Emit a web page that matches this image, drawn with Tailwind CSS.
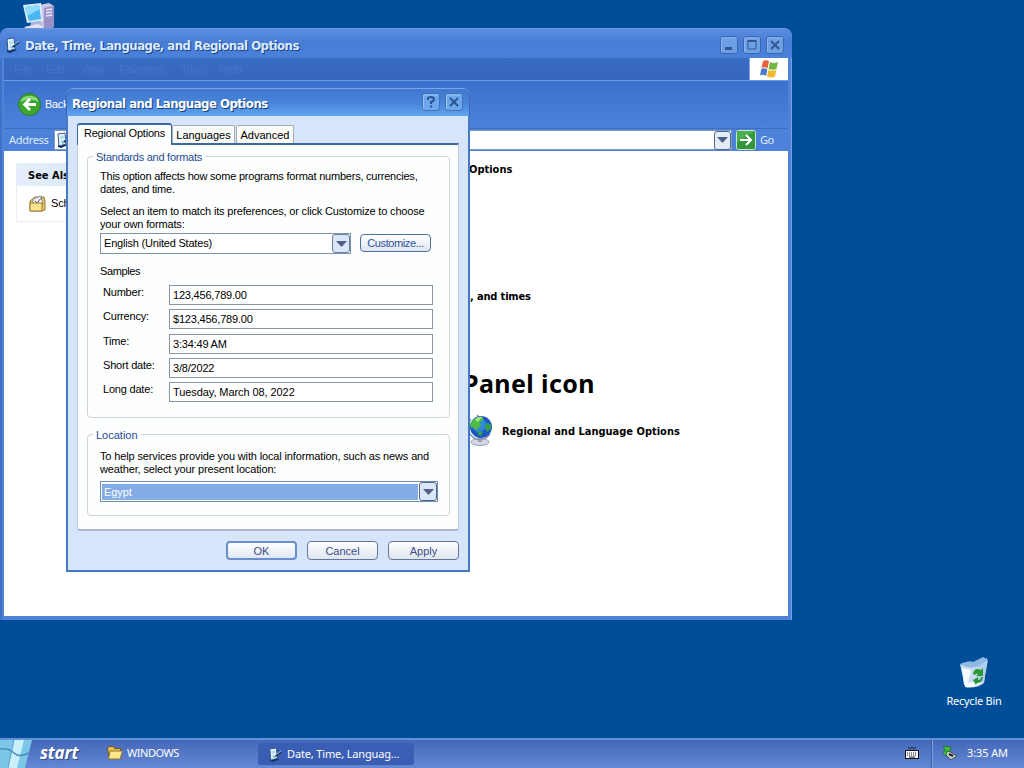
<!DOCTYPE html>
<html lang="en">
<head>
    <meta charset="UTF-8">
    <meta name="viewport" content="width=device-width, initial-scale=1.0">
    <title>Regional and Language Options</title>
    <script src="https://cdn.jsdelivr.net/npm/@tailwindcss/browser@4"></script>
</head>
<body class="relative w-[1024px] h-[768px] overflow-hidden bg-[#004e98] font-['Liberation_Sans',sans-serif] text-[11px] leading-[13px] text-black">
    <svg class="hidden">
        <symbol id="options" viewBox="0 0 16 16">
            <path d="M2 13l8-1 2 1-7 3-3-1z" fill="#14305f"/>
            <path d="M2 2l7-1 1 11-7 2z" fill="#eef7fc" stroke="#2b5590"/>
            <path d="M4 4l4-.5v3L4 8z" fill="#b5def2"/>
            <path d="M5 9l2 2 2-3" stroke="#7fbfdd" stroke-width="1.500" fill="none"/>
            <path d="M8 10l6-5" stroke="#20365c" stroke-width="2"/>
            <path d="M9 8l5-4" stroke="#a9c7e5"/>
        </symbol>
        <symbol id="arrow" viewBox="0 0 11 6"><path d="M0 0h11l-5.500 6z" fill="#4d6185"/></symbol>
    </svg>

    <!-- My Computer icon -->
    <svg class="absolute left-[22px] top-[2px]" width="34" height="34" viewBox="0 0 34 34">
        <path d="M17 3l10-2 5 3v21l-10 3-5-3z" fill="#c9c4e4"/>
        <path d="M22 6l10-2v21l-10 3z" fill="#9a90c8"/>
        <path d="M24 8l6-1M24 11l6-1M24 14l6-1" stroke="#e8e4fa" stroke-width="1.500"/>
        <path d="M1 3l18-2 2 18-16 2z" fill="#dcebf8"/>
        <path d="M3 5l14-2 2 14-12 2z" fill="#4cb6f0"/>
        <path d="M3 5l14-2 1 4-13 7z" fill="#8fdcfc"/>
        <path d="M9 20l9-1 2 5-12 3z" fill="#a9b8dc"/>
        <path d="M2 25l14-3 6 3-12 6z" fill="#e6def0"/>
    </svg>

    <!-- Control panel window -->
    <div class="absolute left-0 top-[28px] w-[792px] h-[592px] rounded-t-[8px] border-t border-[#6b97e4] bg-[#5083d8] flex flex-col px-1 pb-1 shadow-[inset_2px_0_0_#3f73c9,inset_-1px_0_0_#78a0e6]">
        <div class="h-[29px] shrink-0 flex items-center -mx-1 px-[5px] pt-[2px] rounded-t-[8px] bg-linear-to-b from-[#5b8de0] via-[#477cd5] to-[#4a81da]">
            <svg class="w-4 h-4 mr-1"><use href="#options"/></svg>
            <span class="pt-[2px] font-['DejaVu_Sans_Condensed','DejaVu_Sans',sans-serif] font-bold text-[13px] tracking-[-0.5px] text-[#dcebff] [text-shadow:1px_1px_0_#17417f] whitespace-nowrap">Date, Time, Language, and Regional Options</span>
            <div class="ml-auto flex gap-[5px] pr-[3px]">
                <svg width="18" height="18" viewBox="0 0 18 18"><rect x=".5" y=".5" width="17" height="17" rx="2.500" fill="#6c9fe4" stroke="#3c67ae"/><path d="M1.500 16V2h15" stroke="#8bb5ee" fill="none"/><path d="M5 12.500h7" stroke="#34578f" stroke-width="3"/></svg>
                <svg width="18" height="18" viewBox="0 0 18 18"><rect x=".5" y=".5" width="17" height="17" rx="2.500" fill="#6c9fe4" stroke="#3c67ae"/><path d="M1.500 16V2h15" stroke="#8bb5ee" fill="none"/><path d="M5 5h8v8H5z" stroke="#34578f" fill="none"/><path d="M4.500 5h9" stroke="#34578f" stroke-width="2"/></svg>
                <svg width="18" height="18" viewBox="0 0 18 18"><rect x=".5" y=".5" width="17" height="17" rx="2.500" fill="#6c9fe4" stroke="#3c67ae"/><path d="M1.500 16V2h15" stroke="#8bb5ee" fill="none"/><path d="M5 5l8 8M13 5l-8 8" stroke="#34578f" stroke-width="2"/></svg>
            </div>
        </div>
        <div class="h-[23px] shrink-0 flex border-b border-[#6f9ae4] bg-linear-to-b from-[#3b6cc4] to-[#3667be]">
            <div class="flex-1 flex items-center text-[#4675cb]">
                <span class="w-8 pl-[10px]">File</span><span class="w-[35px] pl-[10px]">Edit</span><span class="w-[40px] pl-[10px]">View</span><span class="w-[62px] pl-[8px]">Favorites</span><span class="w-[40px] pl-[8px]">Tools</span><span class="pl-[6px]">Help</span>
            </div>
            <div class="w-[39px] bg-white flex items-center justify-center border-l border-[#7fa6ea]">
                <svg width="20" height="18" viewBox="0 0 20 18">
                    <path d="M4 1q4-1.500 6 .5l-1.500 7q-3-2-6-.5z" fill="#e5623a"/>
                    <path d="M11 2q4 2 8 0l-1.500 7q-4 1.500-8 0z" fill="#72b63e"/>
                    <path d="M2.300 9q3-1.500 6 .5L7 16q-3-2-6-.5z" fill="#4778ce"/>
                    <path d="M9.300 10q4 1.500 8 0L16 16.500q-4 2-8 0z" fill="#f0b932"/>
                </svg>
            </div>
        </div>
        <div class="h-[48px] shrink-0 flex items-center pl-[14px] gap-1 text-white bg-linear-to-b from-[#3c70cd] to-[#4d82da] border-b border-[#3f70c0]">
            <svg width="23" height="23" viewBox="0 0 23 23"><circle cx="11.500" cy="11.500" r="11" fill="#3ba52c" stroke="#2c7a2c"/><path d="M2 9a10 9 0 0 1 19 0q-9-5-19 0z" fill="#8bd97a"/><path d="M18 11.500H7M12 6l-5.500 5.500L12 17" stroke="#fff" stroke-width="2.800" fill="none"/></svg>
            <span class="tracking-[-0.3px]">Back</span>
        </div>
        <div class="h-[22px] shrink-0 flex items-center bg-[#4d82da] text-[#dfeaff]">
            <span class="w-[50px] pl-[5px] pb-[2px] tracking-[-0.3px] font-['Noto_Sans',sans-serif]">Address</span>
            <div class="w-[678px] h-[20px] bg-white border border-[#7f9db9] flex items-center justify-between pl-[1px]">
                <svg class="w-4 h-4"><use href="#options"/></svg>
                <span class="w-[17px] h-[19px] rounded-[3px] border border-[#51688f] bg-[#e4ecf8] flex items-center justify-center"><svg class="w-[11px] h-[6px]"><use href="#arrow"/></svg></span>
            </div>
            <svg class="ml-[4px] mr-[4px]" width="20" height="20" viewBox="0 0 20 20"><rect x=".5" y=".5" width="19" height="19" rx="2" fill="#34963a" stroke="#c8e6cd"/><path d="M1 1h18L1 12z" fill="#4cae50"/><path d="M4 10h11M10 5l5 5-5 5" stroke="#fff" stroke-width="2" fill="none"/></svg>
            <span class="pb-[2px] tracking-[-0.5px] font-['Noto_Sans',sans-serif]">Go</span>
        </div>
        <div class="flex-1 min-h-0 bg-white flex overflow-hidden">
            <div class="w-[454px] pt-[12px] pl-[12px]">
                <div class="h-[23px] w-[180px] pl-[12px] pt-[6px] bg-linear-to-r from-[#e6effb] to-[#c9dcf6] font-['DejaVu_Sans_Condensed',sans-serif] font-bold">See Als</div>
                <div class="h-[36px] w-[180px] border border-t-0 border-[#e8eef6] pl-[12px] flex items-center gap-[5px]">
                    <svg width="17" height="17" viewBox="0 0 17 17"><path d="M1 6l5-4h9l1 4v9l-3 1H1z" fill="#e8c65a" stroke="#9a7d32"/><path d="M4 4l8-3 2 8H4z" fill="#f2f3f6" stroke="#8a8f9b"/><path d="M6 6l2 2 5-6" stroke="#555" fill="none"/><path d="M1 8h12v8H1z" fill="#f9e48e" stroke="#9a7d32"/></svg>
                    <span class="tracking-[-0.2px]">Sch</span>
                </div>
            </div>
            <div class="flex-1 font-['DejaVu_Sans_Condensed','DejaVu_Sans',sans-serif] font-bold whitespace-nowrap">
                <p class="mt-[12px] pl-[11px]">Options</p>
                <p class="mt-[114px] pl-[12px] tracking-[-0.15px]">, and times</p>
                <p class="mt-[64px] pl-[5px] font-['Noto_Sans',sans-serif] text-[25px] leading-[32px] tracking-[0.4px]">Panel icon</p>
                <div class="mt-[15px] pl-[8px] flex items-center gap-[9px]">
                    <svg width="27" height="33" viewBox="0 0 27 33">
                        <ellipse cx="14" cy="28" rx="9" ry="3.500" fill="#d5d8e4" stroke="#9aa0b8"/>
                        <path d="M12 23h4v5h-4z" fill="#9ba3ba"/>
                        <path d="M11 1l2 2M5 5a13 13 0 0 0 5 20 13 13 0 0 0 14-5" fill="none" stroke="#8b93a8" stroke-width="1.500"/>
                        <circle cx="15" cy="13" r="11" fill="#1b57c4"/>
                        <circle cx="13" cy="11" r="7" fill="#2f88d8"/>
                        <path d="M7 6q4-4 9-3l2 3-4 2 1 4-5 4-3-3-2 1-1-4z" fill="#4fbb45"/>
                        <path d="M20 9l5 1v5l-4 3-2-4zM12 17l5 1-2 4-3-1z" fill="#369c4a"/>
                        <path d="M9 6q3-4 8-3-3 1-5 5z" fill="#a5e88c"/>
                    </svg>
                    <span class="pt-px">Regional and Language Options</span>
                </div>
            </div>
        </div>
    </div>

    <!-- Dialog -->
    <div class="absolute left-[66px] top-[88px] w-[404px] h-[484px] rounded-t-[8px] bg-[#4679c4] flex flex-col px-[2px] pb-[2px] border-t border-[#7aa5e8]">
        <div class="h-[27px] shrink-0 flex items-center px-1 pt-[1px] -mx-[2px] rounded-t-[8px] border-x border-[#3b68b4] bg-linear-to-b from-[#4078cf] via-[#4884da] to-[#62a4ee]">
            <span class="pl-[1px] font-['DejaVu_Sans_Condensed','DejaVu_Sans',sans-serif] font-bold text-[13px] tracking-[-0.5px] text-white [text-shadow:1px_1px_0_#17417f] whitespace-nowrap">Regional and Language Options</span>
            <div class="ml-auto flex gap-[5px] pr-[2px] pb-[2px]">
                <svg width="18" height="18" viewBox="0 0 18 18"><rect x=".5" y=".5" width="17" height="17" rx="2.500" fill="#6ba7ea" stroke="#4372b4"/><path d="M1.500 16V2h15" stroke="#98c5f5" fill="none"/><path d="M6 7V5.500Q6 4 9 4t3 2.500Q12 8 9 9v2" stroke="#2c5592" stroke-width="2" fill="none"/><path d="M8 12.500h2v2H8z" fill="#2c5592"/></svg>
                <svg width="18" height="18" viewBox="0 0 18 18"><rect x=".5" y=".5" width="17" height="17" rx="2.500" fill="#6ba7ea" stroke="#4372b4"/><path d="M1.500 16V2h15" stroke="#98c5f5" fill="none"/><path d="M5 5l8 8M13 5l-8 8" stroke="#2c5592" stroke-width="2"/></svg>
            </div>
        </div>
        <div class="flex-1 min-h-0 bg-[#d6e5f9] pl-[9px] pr-[9px] pt-[6px] flex flex-col">
            <!-- Tabs -->
            <div class="flex items-end h-[21px] shrink-0">
                <div class="relative z-10 w-[95px] h-[22px] -mb-[2px] bg-[#fdfefe] border border-b-0 border-t-2 border-[#3d6aa6] rounded-t-[3px] text-center pt-[2px] tracking-[-0.2px] whitespace-nowrap">Regional Options</div>
                <div class="w-[63px] h-[18px] bg-[#fafaf7] border border-b-0 border-[#a5acb2] rounded-t-[2px] text-center pt-[3px]">Languages</div>
                <div class="ml-px w-[58px] h-[18px] bg-[#fafaf7] border border-b-0 border-[#a5acb2] rounded-t-[2px] text-center pt-[3px]">Advanced</div>
            </div>
            <div class="h-[388px] w-[382px] shrink-0 bg-[#fdfefe] border border-[#c3cddb] border-t-2 border-t-[#3d6aa6] border-b-2 border-b-[#a9b6c8] rounded-b-[4px] pl-[9px] pr-[8px] pt-[11px]">
                <div class="relative h-[262px] border border-[#d0d4d0] rounded-[4px] pl-[12px] pt-[13px]">
                    <span class="absolute left-[5px] -top-[6px] px-[3px] bg-[#fdfefe] text-[#1f4a94] tracking-[-0.25px] whitespace-nowrap">Standards and formats</span>
                    <p class="tracking-[-0.22px]">This option affects how some programs format numbers, currencies,<br>dates, and time.</p>
                    <p class="mt-[9px] tracking-[-0.17px]">Select an item to match its preferences, or click Customize to choose<br>your own formats:</p>
                    <div class="flex mt-[2px] items-center">
                        <div class="w-[251px] h-[21px] border border-[#7f93a6] bg-white flex items-center justify-between pl-[3px]">
                            <span class="tracking-[-0.2px]">English (United States)</span>
                            <span class="w-[18px] h-[19px] rounded-[3px] border border-[#6580a8] bg-[#dbe7f8] flex items-center justify-center"><svg class="w-[11px] h-[6px]"><use href="#arrow"/></svg></span>
                        </div>
                        <div class="ml-[9px] mb-px w-[71px] h-[18px] border border-[#50719f] rounded-[4px] bg-linear-to-b from-white to-[#dfe5f0] text-[#2d539c] text-center tracking-[-0.4px] pt-[2px]">Customize...</div>
                    </div>
                    <p class="mt-[11px] tracking-[-0.4px]">Samples</p>
                    <div class="mt-[7px] grid grid-cols-[66px_264px] pl-[3px] tracking-[-0.2px]">
                        <span class="pt-px">Number:</span><span class="h-[20px] mb-[4px] border border-[#88949f] bg-white pl-[3px] pt-[3px]">123,456,789.00</span>
                        <span class="pt-px">Currency:</span><span class="h-[20px] mb-[5px] border border-[#88949f] bg-white pl-[3px] pt-[3px]">$123,456,789.00</span>
                        <span class="pt-px">Time:</span><span class="h-[20px] mb-[4px] border border-[#88949f] bg-white pl-[3px] pt-[3px]">3:34:49 AM</span>
                        <span class="pt-px">Short date:</span><span class="h-[20px] mb-[4px] border border-[#88949f] bg-white pl-[3px] pt-[3px]">3/8/2022</span>
                        <span class="pt-px">Long date:</span><span class="h-[20px] border border-[#88949f] bg-white pl-[3px] pt-[3px] tracking-[-0.08px]">Tuesday, March 08, 2022</span>
                    </div>
                </div>
                <div class="relative mt-[16px] h-[82px] border border-[#d0d4d0] rounded-[4px] pl-[12px] pt-[15px]">
                    <span class="absolute left-[5px] -top-[6px] px-[3px] bg-[#fdfefe] text-[#1f4a94]">Location</span>
                    <p class="tracking-[-0.14px]">To help services provide you with local information, such as news and<br>weather, select your present location:</p>
                    <div class="mt-[5px] w-[338px] h-[21px] border border-[#6d8cae] bg-white flex items-center pl-px">
                        <span class="flex-1 h-[16px] bg-[#84ace6] text-white pl-[2px] pt-[2px] mr-px tracking-[-0.1px]">Egypt</span>
                        <span class="w-[18px] h-[19px] rounded-[3px] border border-[#51688f] bg-[#dbe7f8] flex items-center justify-center"><svg class="w-[11px] h-[6px]"><use href="#arrow"/></svg></span>
                    </div>
                </div>
            </div>
            <div class="flex justify-end gap-[10px] mt-[10px] text-[#3a4d85] text-center">
                <div class="w-[71px] h-[19px] border-2 border-[#6a8fce] rounded-[4px] bg-linear-to-b from-white to-[#e0e7f3] pt-[2px]">OK</div>
                <div class="w-[71px] h-[19px] border border-[#64759a] rounded-[4px] bg-linear-to-b from-white to-[#dfe5ef] pt-[3px]">Cancel</div>
                <div class="w-[71px] h-[19px] border border-[#64759a] rounded-[4px] bg-linear-to-b from-white to-[#dfe5ef] pt-[3px]">Apply</div>
            </div>
        </div>
    </div>

    <!-- Recycle bin -->
    <div class="absolute left-[944px] top-[656px] w-[60px] flex flex-col items-center text-white font-['Noto_Sans',sans-serif] whitespace-nowrap">
        <svg width="30" height="34" viewBox="0 0 30 34">
            <path d="M1 8l10 3 17-9-3 25q-8 6-19 4z" fill="#c5dbf1"/>
            <path d="M1 8q10-4 13-2L24 1l5 3-9 6q-8 4-19-2z" fill="#8fb8e4"/>
            <path d="M20 10l9-6-4 22-7 3z" fill="#b3cfee"/>
            <path d="M3 12l9 2-3 13-4 2z" fill="#f5fbff"/>
            <path d="M6 28q8-4 17-1-7 5-17 4z" fill="#f5fbff"/>
            <path d="M14 18q1-7 8-4l2-2v8h-7l2-2q-2-1-3 1zM24 21q-1 6-6 6l-1 2-3-5 5-3v3q3 0 3-3z" fill="#2c9734"/>
        </svg>
        <span class="mt-[4px] tracking-[-0.25px]">Recycle Bin</span>
    </div>

    <!-- Taskbar -->
    <div class="absolute left-0 bottom-0 w-full h-[30px] flex items-center border-t-2 border-[#6590d8] bg-linear-to-b from-[#4468b8] via-[#5478c6] to-[#6488d4] text-white font-['Noto_Sans',sans-serif] whitespace-nowrap">
        <svg width="32" height="28" viewBox="0 0 32 28">
            <path d="M0 0h32l-7 28H0z" fill="#7cc6e8"/>
            <path d="M14 0h10l-7 28H8z" fill="#c9f0fb"/>
            <path d="M0 9q9-1 14 4t15 0" stroke="#4a8dbd" stroke-width="1.500" fill="none"/>
            <path d="M14 0L8 28" stroke="#5b9dcb"/>
        </svg>
        <span class="w-[75px] pl-[8px] pb-[2px] tracking-[-0.2px] font-['Open_Sans',sans-serif] font-bold italic text-[17px] leading-5 [text-shadow:1px_1px_1px_#2b4686]">start</span>
        <svg class="mb-[3px]" width="16" height="14" viewBox="0 0 16 14"><path d="M.5 2l2-1.500h4l1 2h6v10H2z" fill="#e9be4b" stroke="#6e571f"/><path d="M3 5h12.500l-2.500 8H1.500z" fill="#fbe78c" stroke="#8e7330"/></svg>
        <span class="ml-[4px] pb-[3px] w-[131px] tracking-[-0.45px]">WINDOWS</span>
        <div class="w-[156px] h-[22px] bg-[#3a5eb3] flex items-center gap-[4px] pl-[10px] rounded-[2px]">
            <svg class="w-[15px] h-[15px]"><use href="#options"/></svg>
            <span class="pb-[2px] tracking-[-0.15px]">Date, Time, Languag...</span>
        </div>
        <svg class="ml-auto mr-[13px] mb-[3px]" width="14" height="13" viewBox="0 0 14 13"><path d="M3 1l2 2 2-2 2 2 2-2" stroke="#222" fill="none"/><rect x=".5" y="4.500" width="13" height="8" fill="#f5f5f5" stroke="#111"/><path d="M2 7h10M2 9h10" stroke="#222" stroke-dasharray="1 1"/><path d="M4 11h6" stroke="#222"/></svg>
        <div class="w-[92px] h-full flex items-center border-l border-[#7fa2e2] shadow-[-1px_0_0_#3b5ca8] pl-[10px] pb-[3px]">
            <svg width="15" height="15" viewBox="0 0 15 15"><path d="M1 8l5-2 8 5-6 4z" fill="#c8ccd6" stroke="#444b5e"/><path d="M6 9l4 2" stroke="#222" stroke-width="2"/><path d="M0 1l8 1-1 5-3-1-1 5-3-3 2-3z" fill="#3fb93b" stroke="#1c6e27" stroke-width=".7"/></svg>
            <span class="ml-[9px] tracking-[-0.1px]">3:35 AM</span>
        </div>
    </div>
</body>
</html>
